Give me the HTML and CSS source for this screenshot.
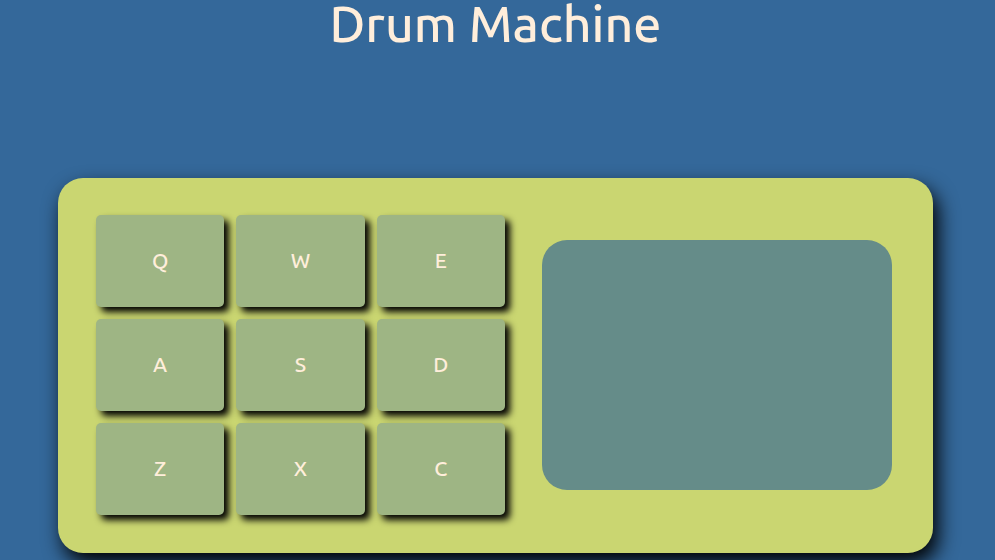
FILE: index.html
```html
<!DOCTYPE html>
<html lang="en">
<head>
<meta charset="utf-8">
<title>Drum Machine</title>
<link rel="stylesheet" href="styles.css">
</head>
<body>
<h1 class="title">Drum Machine</h1>
<main class="machine">
<div class="pads">
<button class="pad" type="button">Q</button>
<button class="pad" type="button">W</button>
<button class="pad" type="button">E</button>
<button class="pad" type="button">A</button>
<button class="pad" type="button">S</button>
<button class="pad" type="button">D</button>
<button class="pad" type="button">Z</button>
<button class="pad" type="button">X</button>
<button class="pad" type="button">C</button>
</div>
<div class="display"></div>
</main>
</body>
</html>
```
FILE: styles.css
```css
* { box-sizing: border-box; }
body {
  margin: 0;
  min-height: 100vh;
  padding-right: 4px;
  background: #34689a;
  color: #ffeedb;
  font-family: Ubuntu, "Noto Sans", sans-serif;
}
.title {
  margin: 0;
  text-align: center;
  font-size: 50px;
  line-height: 46px;
  font-weight: 500;
}
.machine {
  margin: 132px 58px 0;
  padding: 37px 41px 38px 38px;
  border-radius: 25px;
  background: #cad671;
  box-shadow: 5px 10px 20px #000;
  display: flex;
  align-items: center;
  gap: 37px;
}
.pads {
  flex: 1;
  display: grid;
  grid-template-columns: repeat(3, 1fr);
  gap: 12px;
}
.pad {
  height: 92px;
  padding: 0 0 2px;
  border: 0;
  border-radius: 5px;
  background: #9eb584;
  color: #ffeedb;
  font: 500 21px Ubuntu, "Noto Sans", sans-serif;
  box-shadow: 5px 5px 7px #000;
}
.display {
  flex: 0 0 350px;
  height: 250px;
  border-radius: 25px;
  background: #658c89;
}
```
